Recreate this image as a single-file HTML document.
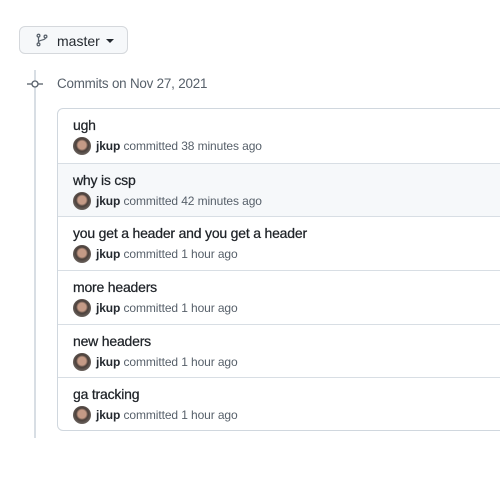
<!DOCTYPE html>
<html><head><style>
body{margin:0;width:500px;height:485px;background:#fff;font-family:"Liberation Sans",sans-serif;color:#24292f;position:relative;overflow:hidden}
.btn{position:absolute;left:19px;top:26px;width:109px;height:28px;border:1px solid #d5d8dc;border-radius:6px;background:#f6f8fa;box-sizing:border-box}
.btn span{position:absolute;left:37px;top:6px;font-size:14px}
.line{position:absolute;left:34px;top:70px;width:2px;height:368px;background:#d8dee4}
.date{position:absolute;left:57px;top:76px;font-size:13.4px;color:#57606a;letter-spacing:-0.2px}
.box{position:absolute;left:57px;top:108px;width:460px;height:323px;border:1px solid #d0d7de;border-radius:6px;box-sizing:border-box;overflow:hidden}
.row{height:53.7px;border-top:1px solid #d8dee4;box-sizing:border-box;position:relative}
.row:first-child{border-top:none}
.row.g{background:#f6f8fa}
.t{position:absolute;left:15px;top:8px;font-size:14px;color:#1f2328;letter-spacing:-0.2px;-webkit-text-stroke:0.25px #1f2328}
.m{position:absolute;left:38px;top:30px;font-size:12px;color:#57606a;letter-spacing:-0.1px}
.m b{color:#24292f}
.av{position:absolute;left:15px;top:28px;width:18px;height:18px;border-radius:50%;background:radial-gradient(circle at 50% 45%,#c49a86 0 30%,#4a3f3a 45%,#8a8580 100%)}
</style></head><body>
<div class="btn">
<svg style="position:absolute;left:15px;top:6px" width="14" height="14" viewBox="0 0 16 16"><g fill="none" stroke="#57606a" stroke-width="1.4"><circle cx="4" cy="3" r="1.6"/><circle cx="4" cy="13" r="1.6"/><circle cx="12" cy="4" r="1.6"/><path d="M4 4.6v6.8M12 5.6c0 3-8 2-8 5"/></g></svg>
<span>master</span>
<svg style="position:absolute;left:86px;top:12px" width="8" height="5"><path d="M0 0h8L4 4z" fill="#24292f"/></svg>
</div>
<div class="line"></div>
<svg style="position:absolute;left:27px;top:78px" width="16" height="12"><line x1="0" y1="6" x2="16" y2="6" stroke="#57606a" stroke-width="1.3"/><circle cx="8" cy="6" r="3" fill="#fff" stroke="#57606a" stroke-width="1.3"/></svg>
<div class="date">Commits on Nov 27, 2021</div>
<div class="box">
<div class="row"><div class="t">ugh</div><div class="av"></div><div class="m"><b>jkup</b> committed 38 minutes ago</div></div>
<div class="row g"><div class="t">why is csp</div><div class="av"></div><div class="m"><b>jkup</b> committed 42 minutes ago</div></div>
<div class="row"><div class="t">you get a header and you get a header</div><div class="av"></div><div class="m"><b>jkup</b> committed 1 hour ago</div></div>
<div class="row"><div class="t">more headers</div><div class="av"></div><div class="m"><b>jkup</b> committed 1 hour ago</div></div>
<div class="row"><div class="t">new headers</div><div class="av"></div><div class="m"><b>jkup</b> committed 1 hour ago</div></div>
<div class="row"><div class="t">ga tracking</div><div class="av"></div><div class="m"><b>jkup</b> committed 1 hour ago</div></div>
</div>
</body></html>
